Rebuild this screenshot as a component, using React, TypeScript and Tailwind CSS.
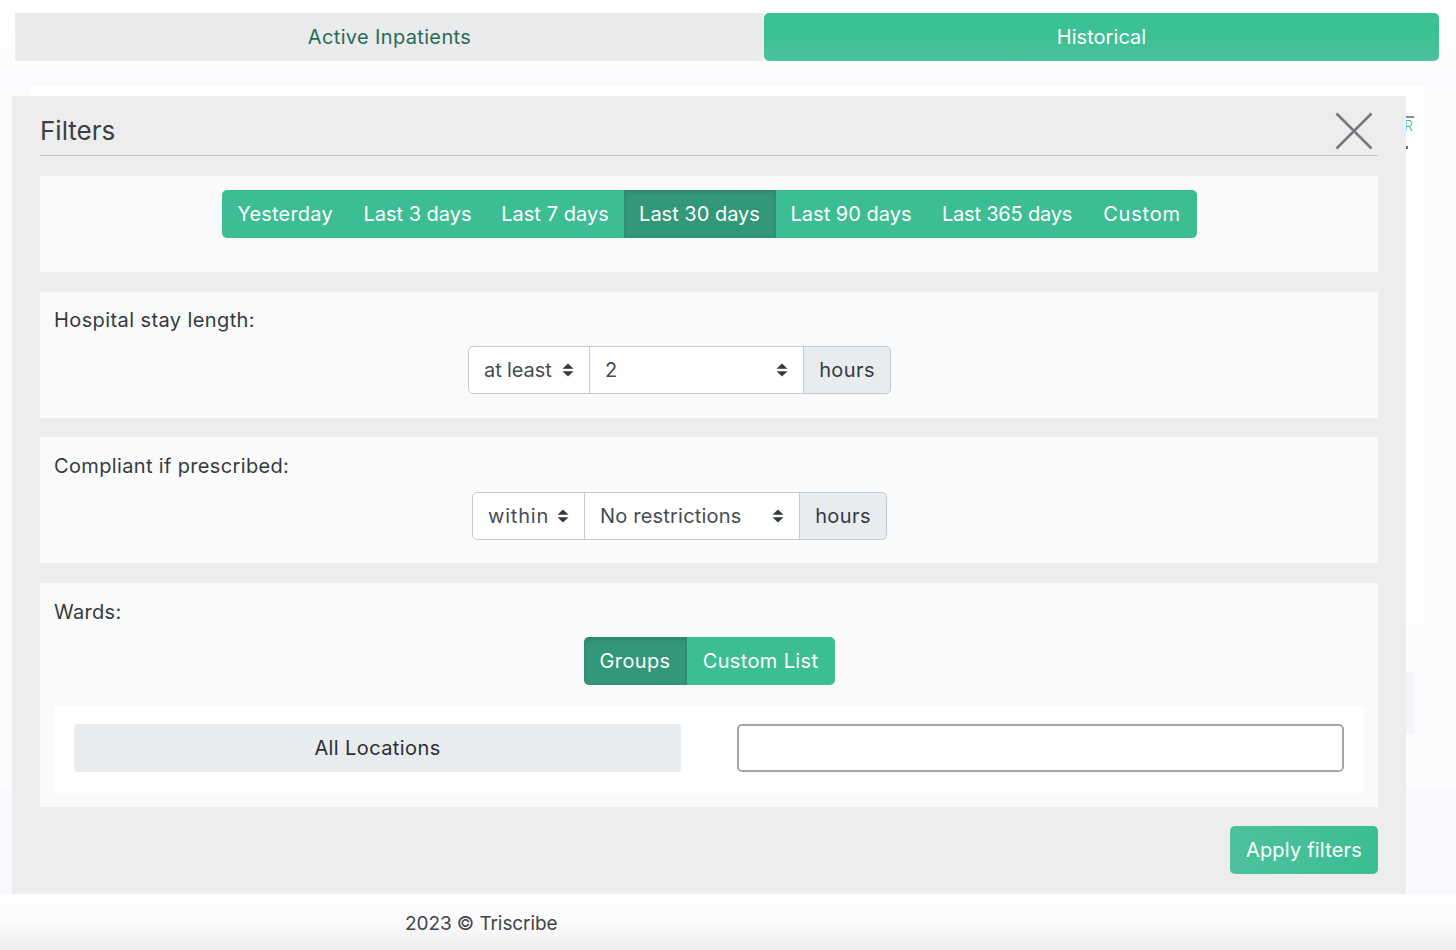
import React from "react";

const ranges = [
  { label: "Yesterday", w: "w-[127px]", extra: "rounded-l-[5px] tracking-[0.2px]" },
  { label: "Last 3 days", w: "w-[138px]", extra: "tracking-[-0.03px]" },
  { label: "Last 7 days", w: "w-[137px]", extra: "tracking-[0.05px]" },
  { label: "Last 30 days", w: "w-[152px]", extra: "tracking-[0px]", active: true },
  { label: "Last 90 days", w: "w-[151px]", extra: "tracking-[0px]" },
  { label: "Last 365 days", w: "w-[161px]", extra: "tracking-[-0.2px]" },
  { label: "Custom", w: "w-[109px]", extra: "rounded-r-[5px] tracking-[0.8px]" },
];

function Arrows() {
  return (
    <svg width="12" height="14" viewBox="0 0 12 14" className="shrink-0">
      <path d="M6 .5 11.5 5.8H.5z" fill="#343a40" />
      <path d="M6 13.5.5 8.2h11z" fill="#343a40" />
    </svg>
  );
}

function SelectGroup({
  a,
  aw,
  b,
  bw,
  offset,
  aTrack,
}: {
  a: string;
  aw: string;
  b: string;
  bw: string;
  offset: string;
  aTrack: string;
}) {
  return (
    <div className={`flex h-[48px] text-[20px] text-[#464c53] ${offset}`}>
      <div className={`${aw} flex items-center justify-between rounded-l-[5px] border border-[#c3cad2] bg-white px-[15px]`}>
        <span className={aTrack}>{a}</span>
        <Arrows />
      </div>
      <div className={`${bw} -ml-px flex items-center justify-between border border-[#c3cad2] bg-white px-[15px]`}>
        <span className="tracking-[0.2px]">{b}</span>
        <Arrows />
      </div>
      <div className="-ml-px flex w-[88px] items-center justify-center rounded-r-[5px] border border-[#c3cad2] bg-[#e9ecef] tracking-[0.4px] text-[#343a40]">
        hours
      </div>
    </div>
  );
}

export default function App() {
  return (
    <div
      className="relative flex h-[950px] w-[1456px] flex-col overflow-hidden bg-[#fcfcfe] text-[#343a40]"
      style={{ fontFamily: "Inter, 'Open Sans', sans-serif" }}
    >
      <div className="flex bg-gradient-to-b from-white from-[20%] to-[#fafbfe] px-[15px] pt-[13px] pb-[25px] text-[20px]">
        <div className="flex h-[48px] w-[749px] items-center justify-center bg-[#e9ebec] tracking-[0.35px] text-[#2a6a57]">
          Active Inpatients
        </div>
        <div className="flex h-[48px] w-[675px] items-center justify-center rounded-[5px] bg-gradient-to-b from-[#3bbf95] via-[#3cc096] to-[#4cc29d] tracking-[0.05px] text-white">
          Historical
        </div>
      </div>

      <div className="relative ml-[30px] mr-[31px] h-[539px] shrink-0 bg-white">
        <div className="absolute right-[11px] top-[30px] h-[2px] w-[60px] bg-[#8b8b8f]" />
        <div className="absolute right-[12px] top-[31px] text-[14px] font-light leading-[18px] text-[#3cbf96]">FILTER</div>
        <div className="absolute left-[1376px] top-[60px] h-[3px] w-[2px] bg-[#666]" />
      </div>

      <div className="absolute left-[1406px] top-[672px] h-[62px] w-[8px] rounded-r-[3px] bg-[#f3f4f7]" />

      <div className="h-[165px] shrink-0" />
      <div className="flex-1 bg-[#f8f9fe]" />

      <div className="flex h-[56px] shrink-0 items-center bg-gradient-to-b from-white via-[#fbfbfb] to-[#eeeeee] pl-[405px] pt-[4px] text-[19px] tracking-[-0.08px] text-[#3f444a]">
        2023 © Triscribe
      </div>

      <div className="absolute left-[12px] top-[96px] flex h-[798px] w-[1394px] flex-col bg-[#ededed] px-[28px]">
        <div className="relative flex h-[60px] shrink-0 items-center border-b border-[#c6c6c6] pt-[10px] text-[26px] text-[#3a3f45]">
          Filters
          <svg width="38" height="38" viewBox="0 0 38 38" className="absolute right-[5px] top-[16px]">
            <path d="M1.5 1.5 36.5 36.5M36.5 1.5 1.5 36.5" stroke="#77777e" strokeWidth="2.6" fill="none" />
          </svg>
        </div>

        <div className="mt-[20px] h-[96px] shrink-0 bg-[#fafafa] pt-[14px]">
          <div className="flex justify-center">
            {ranges.map((r) => (
              <div
                key={r.label}
                className={`flex h-[48px] items-center justify-center text-[20px] text-white ${r.w} ${r.extra} ${
                  r.active
                    ? "bg-[#33977a] shadow-[inset_0_2px_5px_rgba(0,0,0,0.15)]"
                    : "bg-[#3dbd94]"
                }`}
              >
                {r.label}
              </div>
            ))}
          </div>
        </div>

        <div className="mt-[20px] h-[126px] shrink-0 bg-[#fafafa] px-[14px] pt-[16px]">
          <div className="mb-[14px] h-[24px] text-[20px] leading-[24px] tracking-[0.4px]">Hospital stay length:</div>
          <SelectGroup a="at least" aw="w-[122px]" b="2" bw="w-[215px]" offset="ml-[414px]" aTrack="tracking-[-0.1px]" />
        </div>

        <div className="mt-[19px] h-[126px] shrink-0 bg-[#fafafa] px-[14px] pt-[17px]">
          <div className="mb-[14px] h-[24px] text-[20px] leading-[24px] tracking-[0.35px]">Compliant if prescribed:</div>
          <SelectGroup a="within" aw="w-[113px]" b="No restrictions" bw="w-[216px]" offset="ml-[418px]" aTrack="tracking-[0.8px]" />
        </div>

        <div className="mt-[20px] h-[224px] shrink-0 bg-[#fafafa] px-[14px] pt-[17px]">
          <div className="mb-[13px] h-[24px] text-[20px] leading-[24px] tracking-[0.3px]">Wards:</div>
          <div className="flex justify-center text-[20px] tracking-[0.35px] text-white">
            <div className="flex h-[48px] w-[103px] items-center justify-center rounded-l-[5px] bg-[#33977a] shadow-[inset_0_2px_5px_rgba(0,0,0,0.15)]">
              Groups
            </div>
            <div className="flex h-[48px] w-[148px] items-center justify-center rounded-r-[5px] bg-[#3dbd94]">
              Custom List
            </div>
          </div>
          <div className="mt-[21px] flex h-[87px] gap-[56px] bg-white px-[20px] pt-[18px]">
            <div className="flex h-[48px] w-[607px] items-center justify-center rounded-[4px] bg-[#e8ecef] text-[20px] tracking-[0.4px] text-[#2b2f33]">
              All Locations
            </div>
            <div className="h-[48px] w-[607px] rounded-[5px] border-2 border-[#a6a6a6] bg-white" />
          </div>
        </div>

        <div className="mt-[19px] flex justify-end">
          <div className="flex h-[48px] w-[148px] items-center justify-center rounded-[5px] bg-gradient-to-r from-[#4cc29d] to-[#3bbd93] text-[20px] tracking-[0.2px] text-white">
            Apply filters
          </div>
        </div>
      </div>
    </div>
  );
}
